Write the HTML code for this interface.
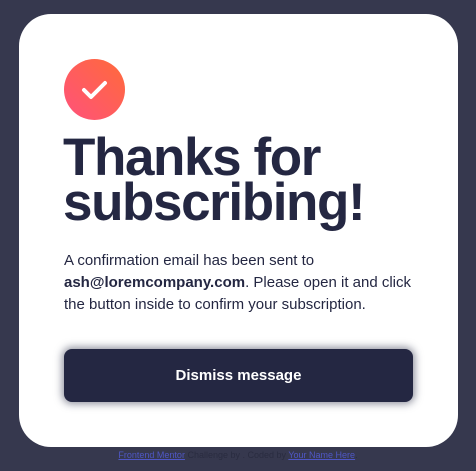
<!DOCTYPE html>
<html><head><style>
body{margin:0;width:476px;height:471px;background:#36384e;font-family:"Liberation Sans",sans-serif;position:relative;overflow:hidden}
.card{position:absolute;left:19px;top:14px;width:439px;height:433px;background:#fff;border-radius:32px}
.icon{position:absolute;left:45px;top:45px;width:61px;height:61px;border-radius:50%;background:linear-gradient(225deg,#ff6a3a,#ff527b)}
h1{position:absolute;left:44px;top:121px;margin:0;font-size:53px;line-height:45px;font-weight:bold;color:#242742;letter-spacing:-1.4px}
p{position:absolute;left:45px;top:236px;margin:0;width:360px;font-size:15px;line-height:22px;color:#242742}
.btn{position:absolute;left:45px;top:335px;width:349px;height:53px;background:#242742;border-radius:8px;color:#fff;font-weight:bold;font-size:15px;text-align:center;line-height:53px;box-shadow:0 0 8px 2px rgba(36,39,66,.5)}
.foot{position:absolute;top:450px;left:0;width:476px;text-align:center;font-size:9px;color:#2a2c40}
.foot a{color:#4f57c5;text-decoration:underline}
</style></head><body>
<div class="card">
<div class="icon"><svg width="61" height="61" viewBox="0 0 61 61"><path d="M20 31 L27 38 L41 24" fill="none" stroke="#fff" stroke-width="4" stroke-linecap="round" stroke-linejoin="round"/></svg></div>
<h1>Thanks for<br>subscribing!</h1>
<p>A confirmation email has been sent to <b>ash@loremcompany.com</b>. Please open it and click the button inside to confirm your subscription.</p>
<div class="btn">Dismiss message</div>
</div>
<div class="foot"><a>Frontend Mentor</a> Challenge by . Coded by <a>Your Name Here</a>.</div>
</body></html>
